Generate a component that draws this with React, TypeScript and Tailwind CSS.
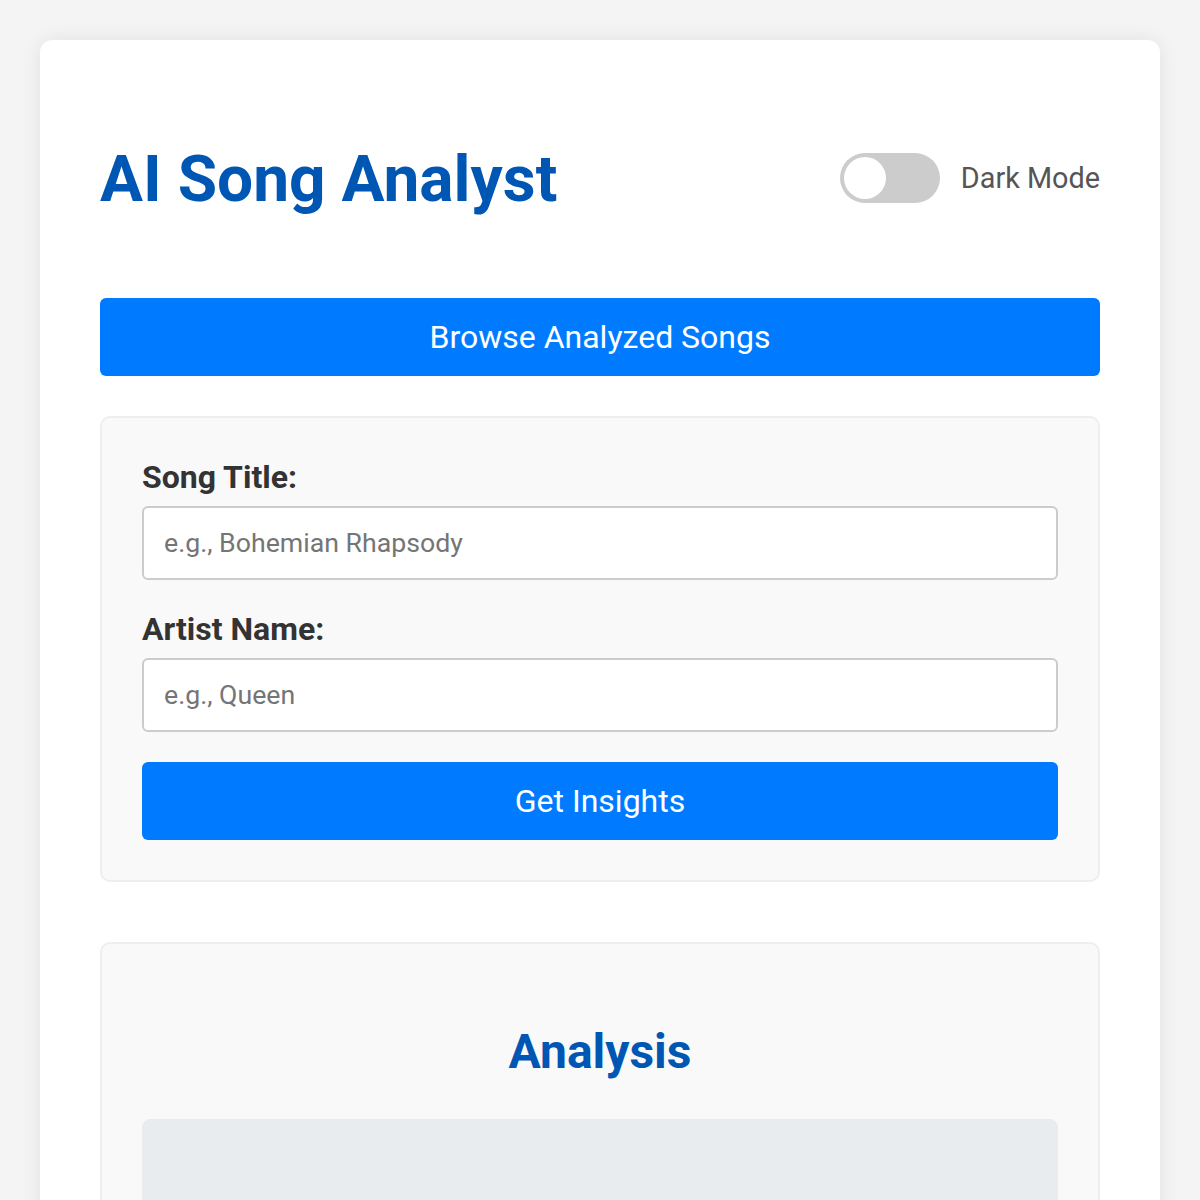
import { useState } from "react";

export default function App() {
  const [dark, setDark] = useState(false);
  const [title, setTitle] = useState("");
  const [artist, setArtist] = useState("");

  return (
    <div className="min-h-screen bg-[#f4f4f4] px-10 pt-10 font-['Roboto',_'Liberation_Sans',_sans-serif]">
      <div className="rounded-xl bg-white px-[60px] pb-[60px] pt-[101px] shadow-[0_0_20px_rgba(0,0,0,0.08)]">
        <div className="flex items-center justify-between">
          <h1 className="text-[64px] font-bold leading-[77px] text-[#0056b3]">AI Song Analyst</h1>
          <div className="-mt-[3px] flex items-center gap-[21px]">
            <button
              onClick={() => setDark(!dark)}
              className="relative h-[50px] w-[100px] rounded-full bg-[#ccc]"
            >
              <span className="absolute left-[4px] top-[4px] h-[42px] w-[42px] rounded-full bg-white" />
            </button>
            <span className="text-[28.8px] leading-[34px] text-[#555]">Dark Mode</span>
          </div>
        </div>

        <button className="mt-[80px] h-[78px] w-full rounded-md bg-[#007bff] text-[32px] text-white">
          Browse Analyzed Songs
        </button>

        <div className="mt-10 rounded-[10px] border-2 border-[#eee] bg-[#f9f9f9] p-10">
          <label className="block text-[32px] font-bold leading-[38px] text-[#333]">Song Title:</label>
          <input
            value={title}
            onChange={(e) => setTitle(e.target.value)}
            placeholder="e.g., Bohemian Rhapsody"
            className="mt-[10px] h-[74px] w-full rounded-md border-2 border-[#ccc] bg-white px-[20px] text-[26.7px] text-[#333] outline-none placeholder:text-[#757575]"
          />
          <label className="mt-[30px] block text-[32px] font-bold leading-[38px] text-[#333]">Artist Name:</label>
          <input
            value={artist}
            onChange={(e) => setArtist(e.target.value)}
            placeholder="e.g., Queen"
            className="mt-[10px] h-[74px] w-full rounded-md border-2 border-[#ccc] bg-white px-[20px] text-[26.7px] text-[#333] outline-none placeholder:text-[#757575]"
          />
          <button className="mt-[30px] h-[78px] w-full rounded-md bg-[#007bff] text-[32px] text-white">
            Get Insights
          </button>
        </div>

        <div className="mt-[60px] rounded-[10px] border-2 border-[#eee] bg-[#f9f9f9] px-10 pb-10 pt-10">
          <h2 className="mt-[40px] text-center text-[48px] font-bold leading-[55px] text-[#0056b3]">Analysis</h2>
          <div className="mt-10 h-[300px] rounded-lg bg-[#e9ecef]" />
        </div>
      </div>
    </div>
  );
}
